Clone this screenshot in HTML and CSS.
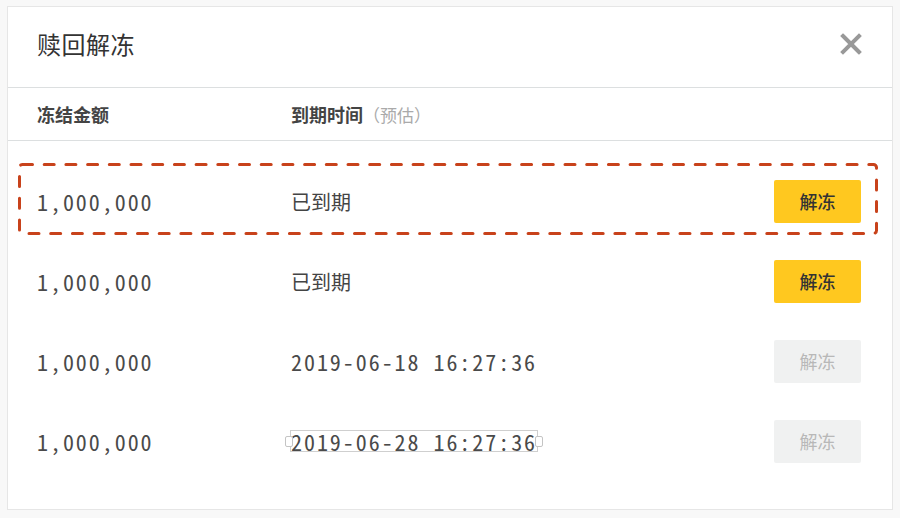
FILE: index.html
```html
<!DOCTYPE html>
<html lang="zh-CN">
<head>
    <meta charset="UTF-8">
    <title>赎回解冻</title>
    <link rel="stylesheet" href="styles.css">
</head>
<body>

    <div class="dialog">
        <div class="dialog-head">
            <h1>赎回解冻</h1>
            <span class="close">
                <svg width="22" height="22" viewBox="0 0 22 22">
                    <path d="M3 3 L19 19 M19 3 L3 19" stroke="#999" stroke-width="4" stroke-linecap="square"/>
                </svg>
            </span>
        </div>

        <div class="cols">
            <span class="col-amount">冻结金额</span>
            <span class="col-time">到期时间<em>（预估）</em></span>
        </div>

        <div class="list">
            <div class="row">
                <span class="col-amount num">1,000,000</span>
                <span class="col-time">已到期</span>
                <button class="btn">解冻</button>
                <!-- dashed highlight -->
                <svg class="mark">
                    <rect x="1.5" y="1.5" rx="3" ry="3"/>
                </svg>
            </div>
            <div class="row">
                <span class="col-amount num">1,000,000</span>
                <span class="col-time">已到期</span>
                <button class="btn">解冻</button>
            </div>
            <div class="row">
                <span class="col-amount num">1,000,000</span>
                <span class="col-time num">2019-06-18 16:27:36</span>
                <button class="btn" disabled>解冻</button>
            </div>
            <div class="row">
                <span class="col-amount num">1,000,000</span>
                <span class="col-time num"><span class="picked">2019-06-28 16:27:36</span></span>
                <button class="btn" disabled>解冻</button>
            </div>
        </div>
    </div>

</body>
</html>
```

FILE: styles.css
```css
body {
    margin: 0;
    background-color: #f8f8f8;
    font-family: "Noto Sans CJK SC", "Noto Sans", sans-serif;
    color: #333;
}

.dialog {
    margin: 6px 7px;
    height: 504px;
    box-sizing: border-box;
    background-color: #fff;
    border: 1px solid #e6e6e6;
}

.dialog-head {
    height: 81px;
    box-sizing: border-box;
    display: flex;
    align-items: center;
    justify-content: space-between;
    padding: 0 30px 8px 29px;
    border-bottom: 1px solid #dcdfe0;
}

.dialog-head h1 {
    margin: 0;
    font-size: 24px;
    font-weight: 400;
    color: #333;
    letter-spacing: 0.5px;
}

.close {
    display: flex;
    margin-top: 2px;
}

.cols {
    height: 53px;
    box-sizing: border-box;
    display: flex;
    align-items: center;
    padding: 0 29px 1px;
    border-bottom: 1px solid #dcdfe0;
    font-size: 18px;
    font-weight: 700;
    color: #444;
}

.cols em {
    font-style: normal;
    font-weight: 400;
    color: #aaa;
    font-size: 17px;
}

.col-amount {
    width: 254px;
}

.col-time {
    flex: 1;
}

.list {
    padding-top: 20px;
}

.row {
    position: relative;
    height: 80px;
    display: flex;
    align-items: center;
    padding: 0 31px 0 29px;
    font-size: 20px;
    color: #444;
}

.num {
    font-family: "Noto Sans Mono CJK SC", "Liberation Mono", monospace;
    font-size: 22px;
    font-weight: 300;
    letter-spacing: 1.95px;
    color: #4a4a4a;
}

.btn {
    width: 87px;
    height: 43px;
    border: none;
    border-radius: 2px;
    background-color: #ffc81f;
    color: #333;
    font-family: inherit;
    font-size: 18px;
    font-weight: 500;
    cursor: pointer;
}

.btn:disabled {
    background-color: #f0f1f1;
    color: #b8b8b8;
    font-weight: 400;
    cursor: default;
}

.mark {
    position: absolute;
    left: 10px;
    top: 2px;
    width: calc(100% - 24px);
    height: 72px;
    overflow: visible;
}

.mark rect {
    width: calc(100% - 3px);
    height: calc(100% - 3px);
    fill: none;
    stroke: #c8421b;
    stroke-width: 3;
    stroke-dasharray: 10 11.7;
    stroke-linecap: round;
}

/* text selection box */
.picked {
    position: relative;
    display: inline-block;
    line-height: 20px;
    outline: 1px solid #cfcfcf;
}

.picked::before,
.picked::after {
    content: "";
    position: absolute;
    top: 50%;
    width: 6px;
    height: 9px;
    margin-top: -5px;
    background: #fff;
    border: 1px solid #c4c4c4;
    border-radius: 2px;
}

.picked::before {
    left: -6px;
}

.picked::after {
    right: -6px;
}
```
